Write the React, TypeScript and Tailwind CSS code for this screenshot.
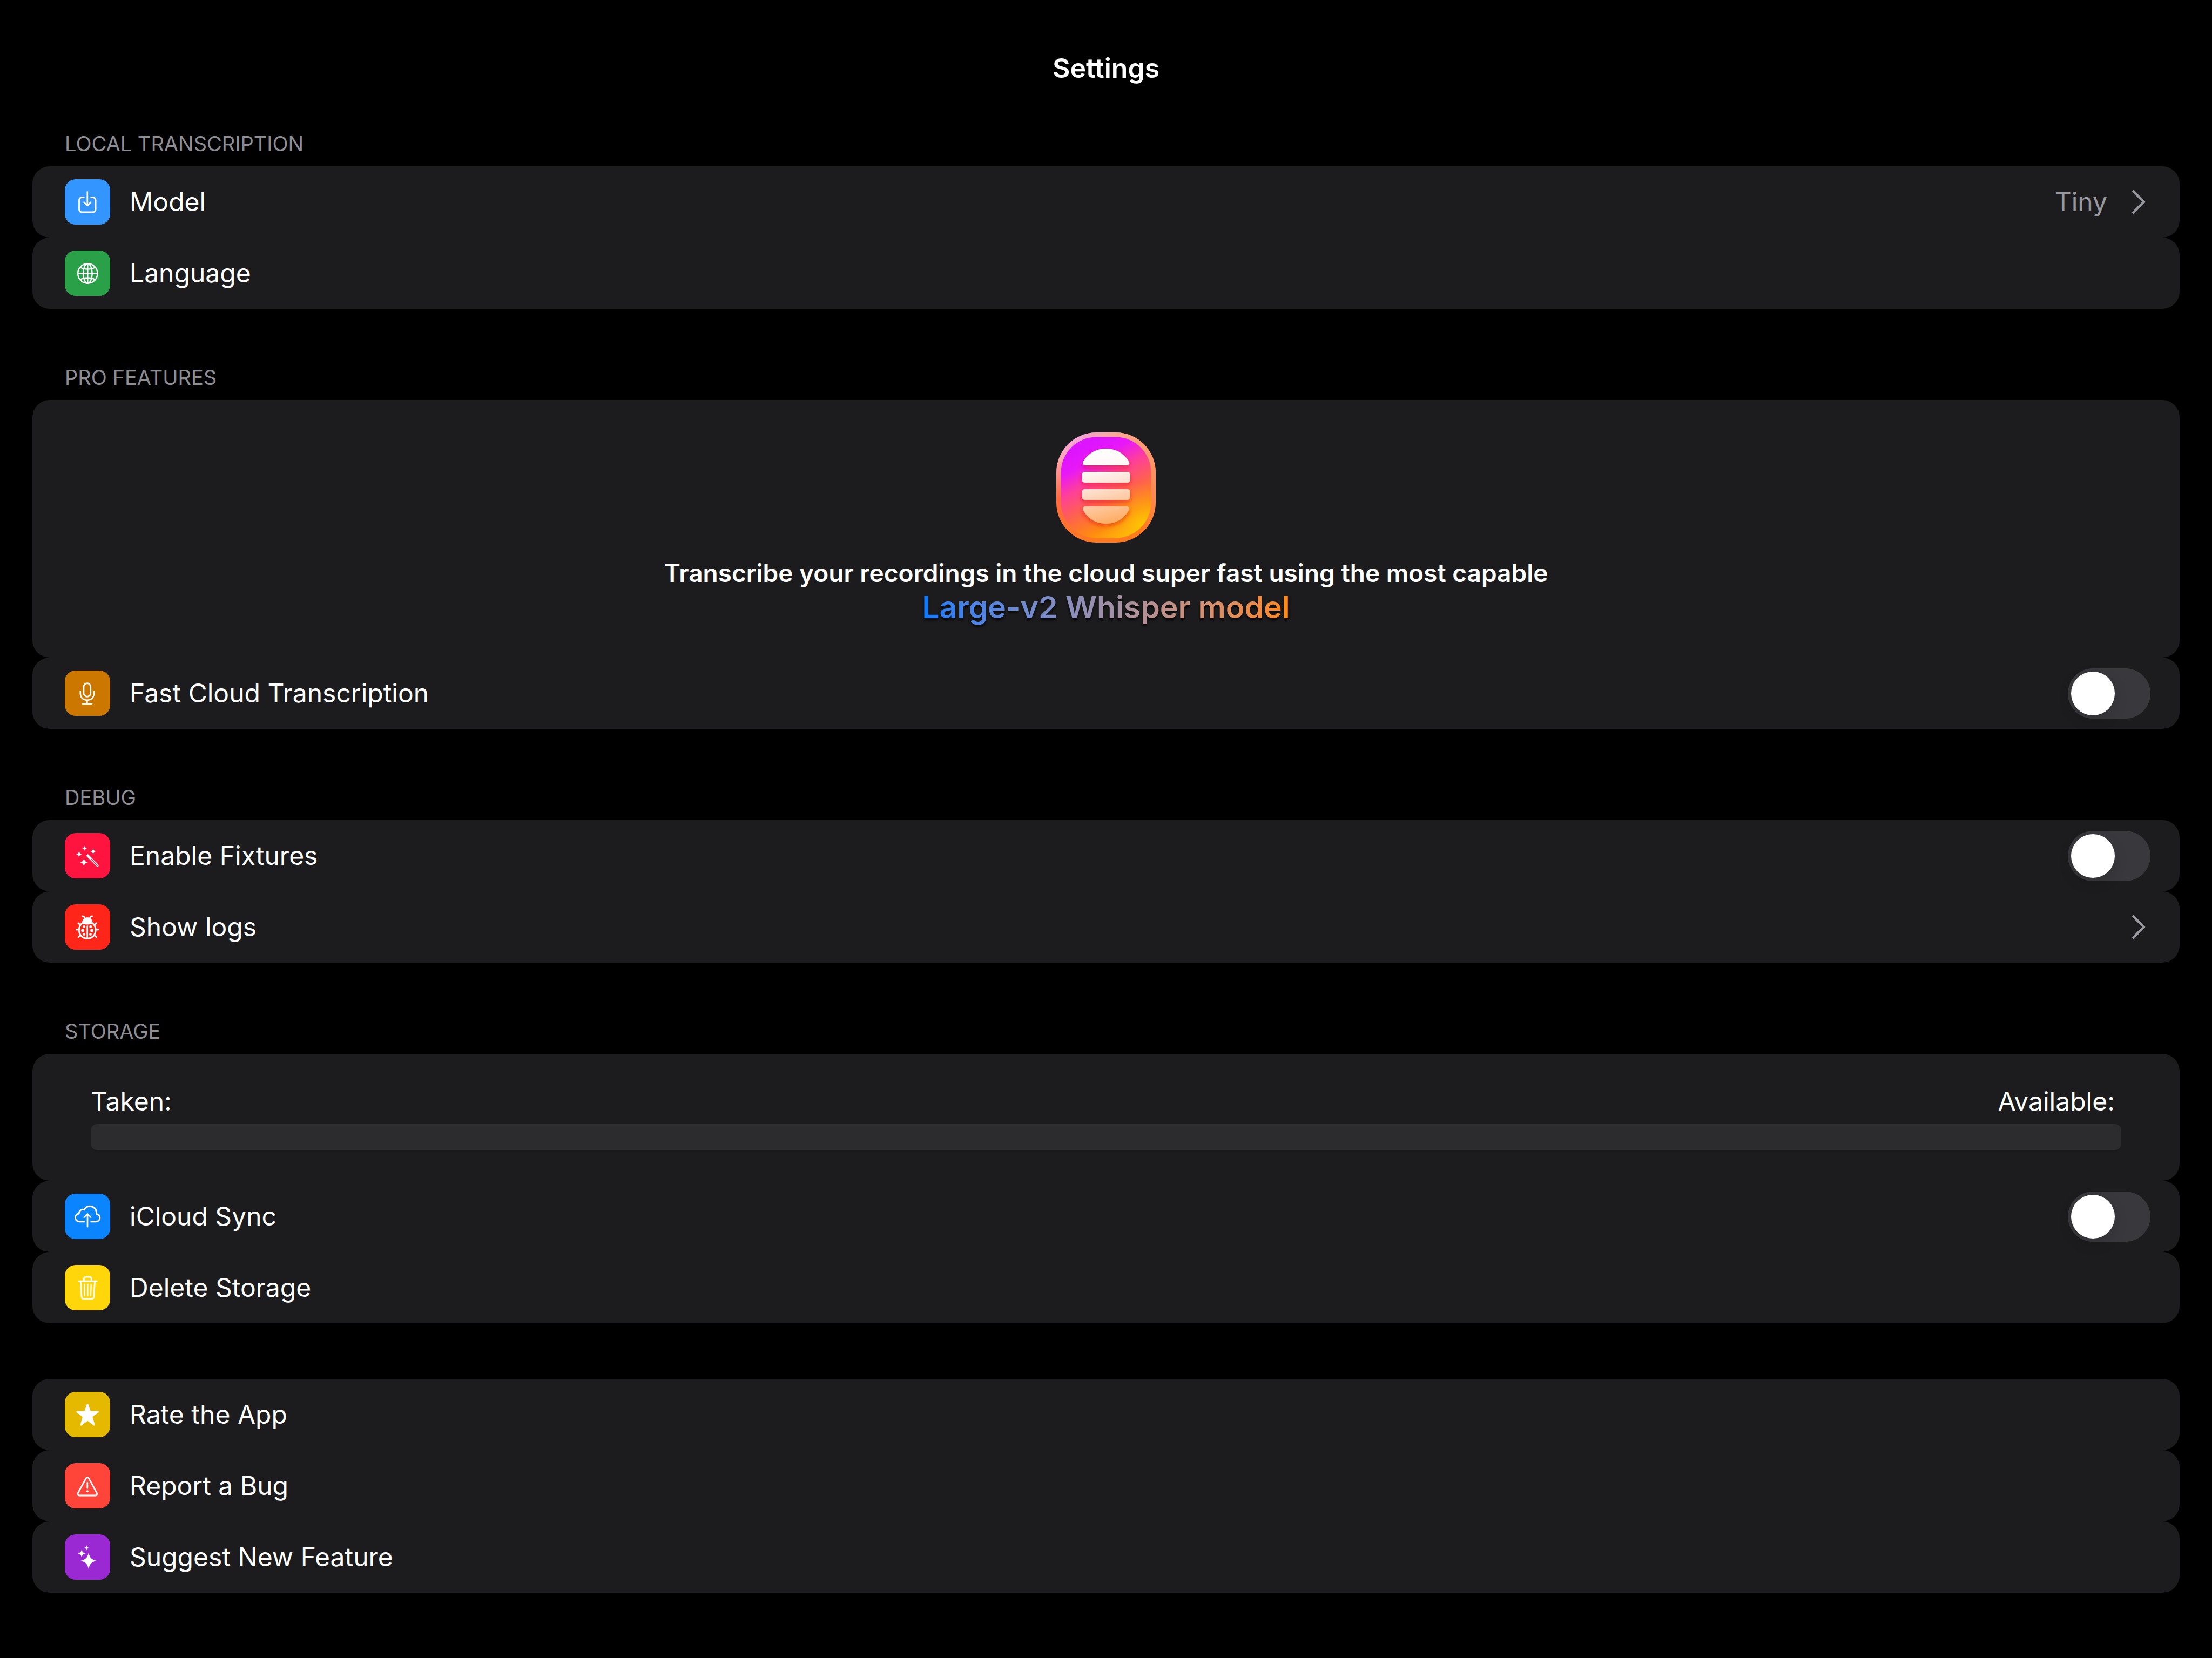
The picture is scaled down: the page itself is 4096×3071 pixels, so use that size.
import { useState, type ReactNode } from 'react';

// Four-pointed star with slender arms, centred on (cx, cy) and reaching r in each direction.
const sparkle = (cx: number, cy: number, r: number) => {
  const a = r * 0.12;
  const b = r * 0.38;
  return `M${cx} ${cy - r}C${cx + a} ${cy - b} ${cx + b} ${cy - a} ${cx + r} ${cy}C${cx + b} ${cy + a} ${cx + a} ${cy + b} ${cx} ${cy + r}C${cx - a} ${cy + b} ${cx - b} ${cy + a} ${cx - r} ${cy}C${cx - b} ${cy - a} ${cx - a} ${cy - b} ${cx} ${cy - r}Z`;
};

function Tile({ color, children }: { color: string; children: ReactNode }) {
  return (
    <span className={`size-[84px] shrink-0 rounded-[20px] ${color}`}>
      <svg
        viewBox="0 0 84 84"
        className="size-full"
        fill="none"
        stroke="#fff"
        strokeWidth="2.9"
        strokeLinecap="round"
        strokeLinejoin="round"
        aria-hidden="true"
      >
        {children}
      </svg>
    </span>
  );
}

const ModelIcon = () => (
  <Tile color="bg-[#3395ff]">
    <path
      strokeLinecap="butt"
      d="M36.4 33.5H31.500a5 5 0 0 0-5 5v17.500a5 5 0 0 0 5 5h20.500a5 5 0 0 0 5-5V38.500a5 5 0 0 0-5-5h-4.500"
    />
    <path d="M41.8 23.5V49M35.6 42.8l6.2 6.2 6.2-6.2" strokeWidth="2.7" />
  </Tile>
);

const GlobeIcon = () => (
  <Tile color="bg-[#2aa048]">
    <g strokeWidth="2.4">
      <circle cx="42.3" cy="42.5" r="18.2" />
      <ellipse cx="42.3" cy="42.5" rx="8.3" ry="18.2" />
      <path d="M42.3 24.3v36.4M24.1 42.5h36.4M28.5 31.2c8 4.4 19.6 4.4 27.6 0M28.5 53.8c8-4.4 19.6-4.4 27.6 0" />
    </g>
  </Tile>
);

const MicIcon = () => (
  <Tile color="bg-[#cc7800]">
    <rect x="35" y="23.6" width="12.8" height="24.8" rx="6.4" strokeWidth="2.6" />
    <path d="M28.8 38.5v3.8c0 7.5 5 12.4 12.6 12.4S54 49.8 54 42.3v-3.8M41.4 54.7v6.8M33 61.6h17" strokeWidth="2.6" />
  </Tile>
);

const WandIcon = () => (
  <Tile color="bg-[#ff1440]">
    <g fill="#fff" stroke="none">
      <path d={sparkle(26.3, 39.3, 5.8)} />
      <path d={sparkle(36.8, 28.2, 4.6)} />
      <path d={sparkle(52.5, 34, 5.6)} />
      <path d={sparkle(35.4, 54.3, 7.6)} />
    </g>
    <path d="M42.4 41.8l18 18.2" strokeWidth="4.6" />
    <path d="M48.8 48.2l11.6 11.8" stroke="#ff1440" strokeWidth="1.4" />
  </Tile>
);

const BugIcon = () => (
  <Tile color="bg-[#ff2518]">
    <path d="M32.7 21.8c2.4.2 3.7 1.5 4.2 3.8M50.7 21.8c-2.4.2-3.7 1.5-4.2 3.8" strokeWidth="2.8" />
    <path d="M24.9 34.9l4 3.6M58.5 34.9l-4 3.6M21.3 46.8h5M62.1 46.8h-5M25 60.8l4-3.8M58.4 60.8l-4-3.8" strokeWidth="2.8" />
    <path d="M31.5 35.3c-3.4 3.2-5.2 7.6-5.2 12.2 0 9.2 6.4 15.8 15.4 15.8s15.4-6.6 15.4-15.8c0-4.6-1.8-9-5.2-12.2" strokeWidth="3" />
    <path d="M31.7 36c0-7 3.8-12 10-12s10 5 10 12c-3 1-6.2 1.4-10 1.4s-7-.4-10-1.4z" fill="#fff" stroke="none" />
    <path d="M41.7 40.5V62" strokeWidth="2.7" />
    <g fill="#fff" stroke="none">
      <circle cx="35.7" cy="41.4" r="2.4" />
      <circle cx="47.7" cy="41.4" r="2.4" />
      <circle cx="33.2" cy="48.5" r="3" />
      <circle cx="50" cy="48.5" r="3" />
      <circle cx="35.7" cy="55.7" r="2.4" />
      <circle cx="47.5" cy="55.7" r="2.4" />
    </g>
  </Tile>
);

const CloudIcon = () => (
  <Tile color="bg-[#0a84ff]">
    <path
      strokeLinecap="butt"
      d="M37 51.8H27.6c-4.9 0-8.2-3.2-8.2-7.6 0-4 2.7-6.9 6.7-7.2.1-5.6 4.6-9 9.9-7.2 1.9-4 5.6-6.6 10.3-6.6 7.7 0 12.8 5.9 12.5 14.4 3.7.7 6 3.5 6 7 0 4.2-3.1 7.2-7.5 7.2h-9.8"
    />
    <path d="M42 61.2V37.5M35.7 43.6l6.3-6.2 6.3 6.2" strokeWidth="2.7" />
  </Tile>
);

const TrashIcon = () => (
  <Tile color="bg-[#ffd60a]">
    <path d="M25.7 30.2h33.6M29.3 30.6l1.7 28c.2 2.6 1.6 4 4.2 4h14.4c2.6 0 4-1.4 4.2-4l1.7-28" strokeWidth="2.8" />
    <path d="M35.4 29.8v-4c0-2.3 1.4-3.6 3.8-3.6h6.2c2.4 0 3.8 1.3 3.8 3.6v4" strokeWidth="2.8" />
    <path d="M36.2 36l.6 20.6M42.3 36v20.6M48.6 36l-.6 20.6" strokeWidth="2.4" />
  </Tile>
);

const StarIcon = () => (
  <Tile color="bg-[#e5b900]">
    <path
      d="M42.1 23.5L46.7 37H61.5L49.7 45.7 54.1 61.2 42.1 52 30.1 61.2 34.5 45.7 22.7 37H37.5Z"
      fill="#fff"
      strokeWidth="2.8"
    />
  </Tile>
);

const WarningIcon = () => (
  <Tile color="bg-[#ff453a]">
    <path d="M39.3 28.2c1.1-2.1 3.9-2.1 5 0L59.3 55.4c1.2 2.2 0 4.6-2.6 4.6H26.9c-2.6 0-3.8-2.4-2.6-4.6z" strokeWidth="2.8" />
    <path d="M41.8 36.5v9.8" strokeWidth="2.8" />
    <circle cx="41.8" cy="52.3" r="2" fill="#fff" stroke="none" />
  </Tile>
);

const SparklesIcon = () => (
  <Tile color="bg-[#9a29d4]">
    <g fill="#fff" stroke="none">
      <path d={sparkle(44, 49, 15.2)} />
      <path d={sparkle(31.2, 35.3, 7.5)} />
      <path d={sparkle(40.4, 25, 4.8)} />
    </g>
  </Tile>
);

const Chevron = () => (
  <svg viewBox="0 0 30 48" className="h-[48px] w-[30px]" fill="none" stroke="#98989f" strokeWidth="4.6" strokeLinecap="round" strokeLinejoin="round" aria-hidden="true">
    <path d="M4.5 4.5L24 24 4.5 43.5" />
  </svg>
);

function AppLogo() {
  return (
    <svg viewBox="0 0 184 204" className="h-[204px] w-[184px]" role="img" aria-label="App icon">
      <defs>
        <linearGradient id="rim" x1="0.2" y1="0" x2="0.5" y2="1">
          <stop offset="0" stopColor="#f0a0e8" />
          <stop offset="0.16" stopColor="#ffa8b8" />
          <stop offset="0.5" stopColor="#ff6a40" />
          <stop offset="1" stopColor="#ff7a1c" />
        </linearGradient>
        <linearGradient id="rimSide" x1="0.45" y1="0.55" x2="0.95" y2="0.15">
          <stop offset="0.2" stopColor="#ffb078" stopOpacity="0" />
          <stop offset="1" stopColor="#ffa070" stopOpacity="0.85" />
        </linearGradient>
        <linearGradient id="face" gradientUnits="userSpaceOnUse" x1="48" y1="24" x2="136" y2="196">
          <stop offset="0" stopColor="#dc14ff" />
          <stop offset="0.17" stopColor="#e818f8" />
          <stop offset="0.36" stopColor="#ff4098" />
          <stop offset="0.56" stopColor="#ff6050" />
          <stop offset="0.8" stopColor="#ff8a10" />
          <stop offset="1" stopColor="#ffc400" />
        </linearGradient>
        <radialGradient id="glow" gradientUnits="userSpaceOnUse" cx="162" cy="172" r="80">
          <stop offset="0" stopColor="#ffc800" stopOpacity="0.9" />
          <stop offset="1" stopColor="#ff9a20" stopOpacity="0" />
        </radialGradient>
        <linearGradient id="bars" gradientUnits="userSpaceOnUse" x1="75" y1="30" x2="110" y2="170">
          <stop offset="0" stopColor="#ffffff" />
          <stop offset="0.25" stopColor="#fff8f6" />
          <stop offset="0.45" stopColor="#ffe6da" />
          <stop offset="0.7" stopColor="#ffcaa4" />
          <stop offset="1" stopColor="#ffa95c" />
        </linearGradient>
        <filter id="barShadow" x="-30%" y="-20%" width="160%" height="150%">
          <feDropShadow dx="0" dy="4" stdDeviation="4" floodColor="#d81818" floodOpacity="0.55" />
        </filter>
      </defs>
      <rect width="184" height="204" rx="74" fill="url(#rim)" />
      <rect width="184" height="204" rx="74" fill="url(#rimSide)" />
      <rect x="8.5" y="8.5" width="167" height="187" rx="66" fill="url(#face)" />
      <rect x="8.5" y="8.5" width="167" height="187" rx="66" fill="url(#glow)" />
      <g fill="url(#bars)" filter="url(#barShadow)">
        <path d="M54 61c-4 0-6-3.5-4.3-7C58 39.5 73 30 92 30s34 9.5 42.3 24c1.7 3.5-.3 7-4.3 7z" />
        <rect x="47.7" y="73" width="89" height="20" rx="5" />
        <rect x="47.7" y="105" width="89" height="20" rx="5" />
        <path d="M54 137c-4 0-6 3.5-4.3 7C58 159 73 169 92 169s34-10 42.3-25c1.7-3.5-.3-7-4.3-7z" />
      </g>
    </svg>
  );
}

const rowClass = 'flex h-[132px] w-full items-center rounded-[32px] bg-[#1c1c1e] pl-[60px] pr-[54px] text-left';

function ButtonRow({ icon, label, value, chevron }: { icon: ReactNode; label: string; value?: string; chevron?: boolean }) {
  return (
    <button type="button" className={rowClass}>
      {icon}
      <span className="ml-9 grow">{label}</span>
      {value && <span className="mr-11 text-[#98989f]">{value}</span>}
      {chevron && (
        <span className="mr-1.5">
          <Chevron />
        </span>
      )}
    </button>
  );
}

function SwitchRow({ icon, label }: { icon: ReactNode; label: string }) {
  const [on, setOn] = useState(false);
  return (
    <label className={rowClass}>
      {icon}
      <span className="ml-9 grow">{label}</span>
      <input
        type="checkbox"
        role="switch"
        checked={on}
        onChange={(e) => setOn(e.target.checked)}
        className="flex h-[93px] w-[153px] shrink-0 appearance-none items-center rounded-full bg-[#39393d] px-1.5 before:size-[81px] before:rounded-full before:bg-white before:shadow-[0_9px_24px_rgba(0,0,0,0.15)] checked:justify-end checked:bg-[#30d158]"
      />
    </label>
  );
}

function Section({ title, children }: { title?: string; children: ReactNode }) {
  return (
    <section>
      {title && <h2 className="mb-[18px] pl-[60px] text-[38px] leading-[48px] text-[#8d8d93]">{title}</h2>}
      {children}
    </section>
  );
}

export default function App() {
  return (
    <main className="min-h-screen bg-black px-[60px] pt-24 pb-[114px] font-['Inter',sans-serif] text-[48px] leading-[60px] text-white">
      <h1 className="mb-[86px] text-center text-[50px] font-semibold">Settings</h1>

      <div className="flex flex-col gap-[103px]">
        <Section title="LOCAL TRANSCRIPTION">
          <ButtonRow icon={<ModelIcon />} label="Model" value="Tiny" chevron />
          <ButtonRow icon={<GlobeIcon />} label="Language" />
        </Section>

        <Section title="PRO FEATURES">
          <div className="flex flex-col items-center rounded-[32px] bg-[#1c1c1e] pt-[60px] pb-[59px] text-center">
            <AppLogo />
            <p className="mt-[26px] text-[46px] font-semibold">
              Transcribe your recordings in the cloud super fast using the most capable
            </p>
            <p className="bg-linear-to-r from-[#007aff] to-[#ff8800] bg-clip-text text-[57px] leading-[68px] font-semibold text-transparent drop-shadow-[0_4px_2px_rgba(0,0,0,0.7)]">
              Large-v2 Whisper model
            </p>
          </div>
          <SwitchRow icon={<MicIcon />} label="Fast Cloud Transcription" />
        </Section>

        <Section title="DEBUG">
          <SwitchRow icon={<WandIcon />} label="Enable Fixtures" />
          <ButtonRow icon={<BugIcon />} label="Show logs" chevron />
        </Section>

        <Section title="STORAGE">
          <div className="rounded-[32px] bg-[#1c1c1e] px-[108px] pt-[58px] pb-[57px]">
            <div className="flex justify-between pr-3">
              <span>Taken:</span>
              <span>Available:</span>
            </div>
            <div role="progressbar" aria-label="Storage used" aria-valuenow={0} className="mt-3 h-12 rounded-xl bg-[#2c2c2e]" />
          </div>
          <SwitchRow icon={<CloudIcon />} label="iCloud Sync" />
          <ButtonRow icon={<TrashIcon />} label="Delete Storage" />
        </Section>

        <Section>
          <ButtonRow icon={<StarIcon />} label="Rate the App" />
          <ButtonRow icon={<WarningIcon />} label="Report a Bug" />
          <ButtonRow icon={<SparklesIcon />} label="Suggest New Feature" />
        </Section>
      </div>
    </main>
  );
}
